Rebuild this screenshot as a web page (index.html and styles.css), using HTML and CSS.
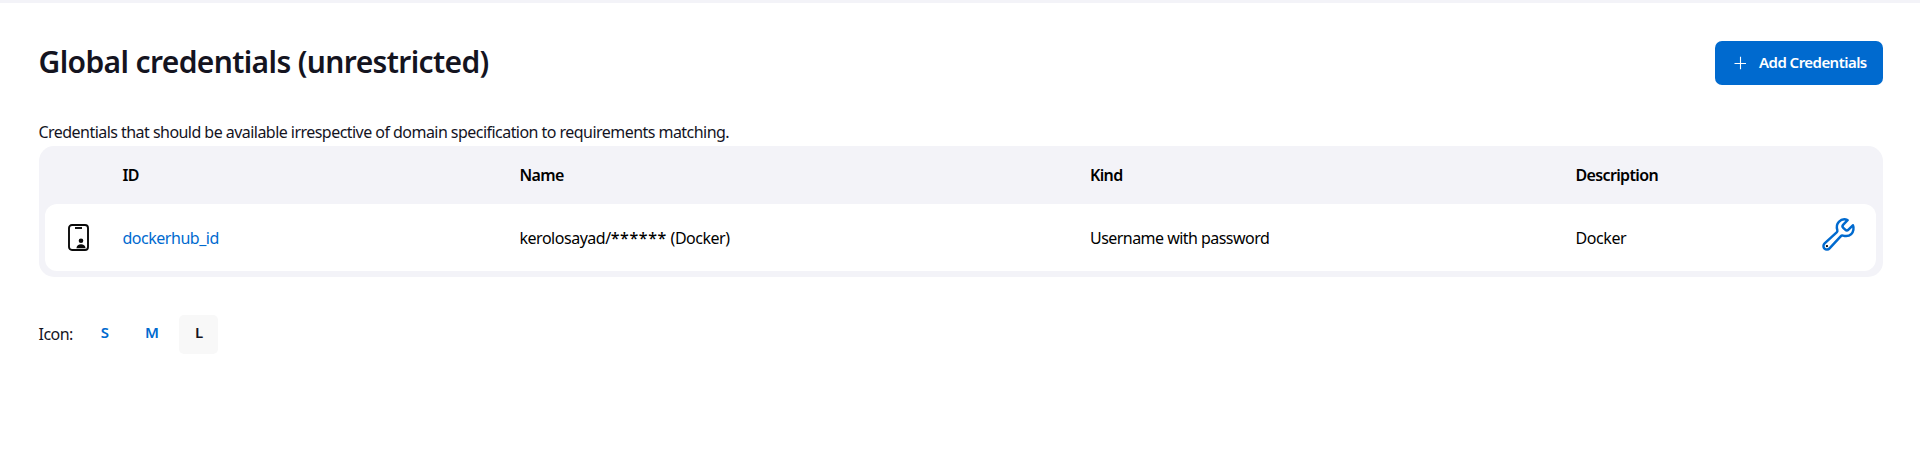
FILE: index.html
```html
<!DOCTYPE html>
<html lang="en">
<head>
<meta charset="utf-8">
<title>Global credentials (unrestricted)</title>
<link rel="stylesheet" href="styles.css">
</head>
<body>
<main class="page">
  <header class="app-bar">
    <h1 class="title">Global credentials (unrestricted)</h1>
    <a class="button">
      <svg class="plus" viewBox="0 0 14 14"><path d="M7.500 .7v12.600M1.500 7.500h11.500"/></svg>
      <span class="button-text">Add Credentials</span>
    </a>
  </header>
  <p class="intro">Credentials that should be available irrespective of domain specification to requirements matching.</p>
  <section class="table">
    <div class="row head">
      <span></span><span class="h-id">ID</span><span class="h-name">Name</span><span class="h-kind">Kind</span><span class="h-desc">Description</span><span></span>
    </div>
    <div class="row body">
      <svg class="card-icon" viewBox="0 0 21 27"><rect x="1" y="1" width="19" height="25" rx="3"/><path d="M7 4h7"/><circle class="solid" cx="13" cy="16.8" r="2.3"/><path class="solid" d="M8.4 24.2c.2-2.700 2.200-4 4.600-4s4.400 1.300 4.600 4z"/></svg>
      <a class="link">dockerhub_id</a>
      <span class="c-name">kerolosayad/<span class="stars">******</span> (Docker)</span>
      <span class="c-kind">Username with password</span>
      <span class="c-desc">Docker</span>
      <svg class="wrench" viewBox="0 0 512 512"><path d="M393.87 190a32.1 32.1 0 01-45.25 0l-26.57-26.57a32.09 32.09 0 010-45.26L382.19 58a1 1 0 00-.3-1.64c-38.82-16.64-89.15-8.16-121.11 23.57-30.58 30.35-32.32 76-21.12 115.84a31.93 31.93 0 01-9.06 32.08L64 380a48.17 48.17 0 1068 68l153.86-167a31.93 31.93 0 0131.6-9.13c39.54 10.59 84.54 8.6 114.72-21.19 32.49-32 39.5-88.56 23.75-120.93a1 1 0 00-1.6-.26z"/><circle cx="96" cy="416" r="16"/></svg>
    </div>
  </section>
  <footer class="sizes">
    <span class="sizes-label">Icon:</span>
    <a class="size">S</a>
    <a class="size">M</a>
    <span class="size current">L</span>
  </footer>
</main>
</body>
</html>
```
FILE: styles.css
```css
* { box-sizing: border-box; }
body {
  margin: 0;
  background: #fff;
  color: #14141f;
  font: 16px/24px "Noto Sans", sans-serif;
  letter-spacing: -0.54px;
  white-space: nowrap;
}
.page {
  height: 450px;
  border-top: 3px solid #f3f3f8;
  padding: 38px 37px 0 38.5px;
}
.app-bar {
  display: flex;
  justify-content: space-between;
  align-items: center;
  height: 44px;
}
.title {
  margin: 0;
  padding-bottom: 3px;
  font-size: 30px;
  font-weight: 600;
  letter-spacing: -0.63px;
  line-height: 40px;
}
.button {
  display: flex;
  align-items: center;
  width: 168px;
  height: 44px;
  padding: 0 0 2px 18px;
  gap: 12px;
  border-radius: 7px;
  background: #006acf;
  color: #fff;
  font-size: 15px;
  font-weight: 600;
}
.button-text { padding-bottom: 1px; }
.plus {
  width: 14px;
  height: 14px;
  margin-top: 2px;
  fill: none;
  stroke: #fff;
  stroke-width: 1.1;
}
.intro {
  margin: 35px 0 0;
  height: 26px;
}
.table {
  height: 131px;
  padding: 0 7px 6px 6px;
  border-radius: 15px;
  background: #f3f3f8;
  color: #000;
}
.row {
  display: grid;
  grid-template-columns: 78px 397px 570.5px 485.500px 247px 1fr;
  align-items: center;
}
.head {
  height: 58px;
  padding-bottom: 1px;
  font-weight: 600;
  letter-spacing: -0.65px;
}
.body {
  height: 67px;
  border-radius: 12px;
  background: #fff;
}
.card-icon {
  width: 21px;
  height: 27px;
  margin-left: 23.500px;
  fill: none;
  stroke: #0a0a0a;
  stroke-width: 1.900;
}
.solid { fill: #0a0a0a; stroke: none; }
.link { color: #006acf; letter-spacing: -0.48px; }
.c-desc { letter-spacing: -0.4px; }
.c-name { letter-spacing: -0.48px; }
.stars { letter-spacing: 0.6px; font-weight: 500; }
.wrench {
  width: 37px;
  height: 37px;
  margin-bottom: 7px;
  margin-left: -3px;
  stroke: #006acf;
  stroke-width: 34;
  stroke-linecap: round;
  stroke-linejoin: round;
  fill: none;
}
.wrench circle { fill: #000; stroke: none; }
.sizes {
  display: flex;
  align-items: center;
  height: 39px;
  margin-top: 38px;
  gap: 8px;
}
.sizes-label { width: 38.5px; padding-bottom: 1px; }
.size {
  width: 39px;
  height: 39px;
  padding-left: 1px;
  border-radius: 5px;
  color: #006acf;
  font-size: 15px;
  font-weight: 600;
  letter-spacing: 0;
  line-height: 35px;
  text-align: center;
}
.current { background: #f8f8f8; color: #14141f; }
```
